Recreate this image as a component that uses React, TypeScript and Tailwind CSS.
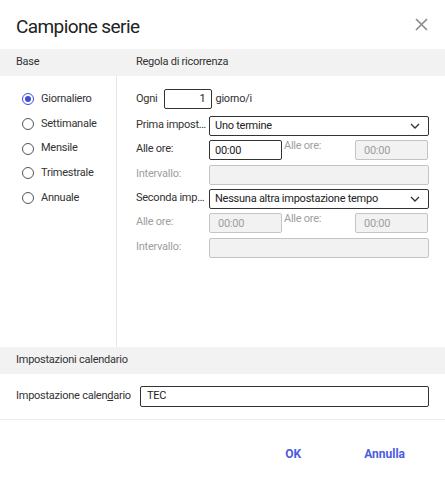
import React from 'react';

const options = ['Giornaliero', 'Settimanale', 'Mensile', 'Trimestrale', 'Annuale'];

const Chevron = () => (
  <svg width="10" height="6" viewBox="0 0 10 6" className="shrink-0">
    <path d="M1 1l4 4 4-4" fill="none" stroke="#333" strokeWidth="1.3" />
  </svg>
);

const Select = ({ value }: { value: string }) => (
  <div className="flex-1 h-[20px] border border-[#333] rounded-[2px] flex items-center justify-between pl-[5px] pr-[8px] text-[#222]">
    <span className="pt-[1px]">{value}</span>
    <Chevron />
  </div>
);

const TimeInput = ({ disabled }: { disabled?: boolean }) => (
  <div
    className={
      disabled
        ? 'w-[73px] h-[20px] border border-[#c4c4c4] bg-[#f2f2f2] rounded-[2px] flex items-center pl-[8px] pt-[2px] text-[#9e9e9e]'
        : 'w-[73px] h-[20px] border border-[#333] rounded-[2px] flex items-center pl-[5px] pt-[2px] text-[#222]'
    }
  >
    00:00
  </div>
);

const Label = ({ children, disabled }: { children: React.ReactNode; disabled?: boolean }) => (
  <div className={'w-[73px] shrink-0 truncate pt-[1px] pr-[2px] ' + (disabled ? 'text-[#9e9e9e]' : 'text-[#333]')}>{children}</div>
);

const TimeRow = ({ disabled }: { disabled?: boolean }) => (
  <div className="flex items-start">
    <Label disabled={disabled}>Alle ore:</Label>
    <TimeInput disabled={disabled} />
    <div className="w-[73px] pl-[2px] -mt-[2px] text-[#9e9e9e]">Alle ore:</div>
    <div className="flex-1 flex">
      <TimeInput disabled />
    </div>
  </div>
);

const App = () => {
  return (
    <div className="w-[445px] h-[482px] bg-white flex flex-col text-[11px] tracking-[-0.25px] font-['Roboto',sans-serif] text-[#333]">
      <div className="h-[49px] flex items-center justify-between pl-4 pr-[17px] pt-[6px]">
        <h1 className="text-[19px] tracking-[-0.6px] text-[#222]">Campione serie</h1>
        <svg width="13" height="13" viewBox="0 0 13 13" className="-mt-[7px]">
          <path d="M1 1l11 11M12 1L1 12" stroke="#8a8a8a" strokeWidth="1.6" />
        </svg>
      </div>

      <div className="h-[27px] bg-[#f2f2f2] flex items-center text-[#333]">
        <div className="w-[117px] pl-4">Base</div>
        <div className="pl-[19px]">Regola di ricorrenza</div>
      </div>

      <div className="flex h-[271px]">
        <div className="w-[117px] border-r border-[#e6e6e6] pt-[17px] pl-[22px] flex flex-col gap-[12.75px]">
          {options.map((o, i) => (
            <div key={o} className="flex items-center gap-[7px] h-[12px]">
              {i === 0 ? (
                <span className="w-[12px] h-[12px] rounded-full border-[1.5px] border-[#3d4fd6] flex items-center justify-center">
                  <span className="w-[6px] h-[6px] rounded-full bg-[#3d4fd6]" />
                </span>
              ) : (
                <span className="w-[12px] h-[12px] rounded-full border-[1.5px] border-[#555]" />
              )}
              <span className="text-[#333]">{o}</span>
            </div>
          ))}
        </div>

        <div className="flex-1 pl-[19px] pr-4 pt-[13px] flex flex-col gap-[4px]">
          <div className="flex items-center mb-[3px]">
            <span className="mr-[6px]">Ogni</span>
            <div className="w-[48px] h-[20px] border border-[#333] rounded-[2px] flex items-center justify-end pr-[5px] text-[#222]">1</div>
            <span className="ml-[4px]">giorno/i</span>
          </div>
          <div className="flex items-start">
            <Label>Prima impostazione tempo</Label>
            <Select value="Uno termine" />
          </div>
          <TimeRow />
          <div className="flex items-start mt-[1px]">
            <Label disabled>Intervallo:</Label>
            <div className="flex-1 h-[20px] border border-[#c4c4c4] bg-[#f2f2f2] rounded-[2px]" />
          </div>
          <div className="flex items-start">
            <Label>Seconda impostazione tempo</Label>
            <Select value="Nessuna altra impostazione tempo" />
          </div>
          <TimeRow disabled />
          <div className="flex items-start mt-[1px]">
            <Label disabled>Intervallo:</Label>
            <div className="flex-1 h-[20px] border border-[#c4c4c4] bg-[#f2f2f2] rounded-[2px]" />
          </div>
        </div>
      </div>

      <div className="h-[27px] bg-[#f2f2f2] flex items-center pl-4">Impostazioni calendario</div>

      <div className="h-[46px] border-b border-[#ebebeb] flex items-center pl-4 pr-4">
        <span className="w-[124px] shrink-0 whitespace-nowrap">
          Impostazione calen<span className="underline">d</span>ario
        </span>
        <div className="flex-1 h-[21px] border border-[#333] rounded-[2px] flex items-center pl-[6px] text-[#222]">TEC</div>
      </div>

      <div className="flex-1 flex items-start justify-end pr-[40px] gap-[63px] pt-[25px] text-[12px] tracking-normal font-bold text-[#4b5be0]">
        <button className="font-bold">OK</button>
        <button className="font-bold">Annulla</button>
      </div>
    </div>
  );
};

export default App;
